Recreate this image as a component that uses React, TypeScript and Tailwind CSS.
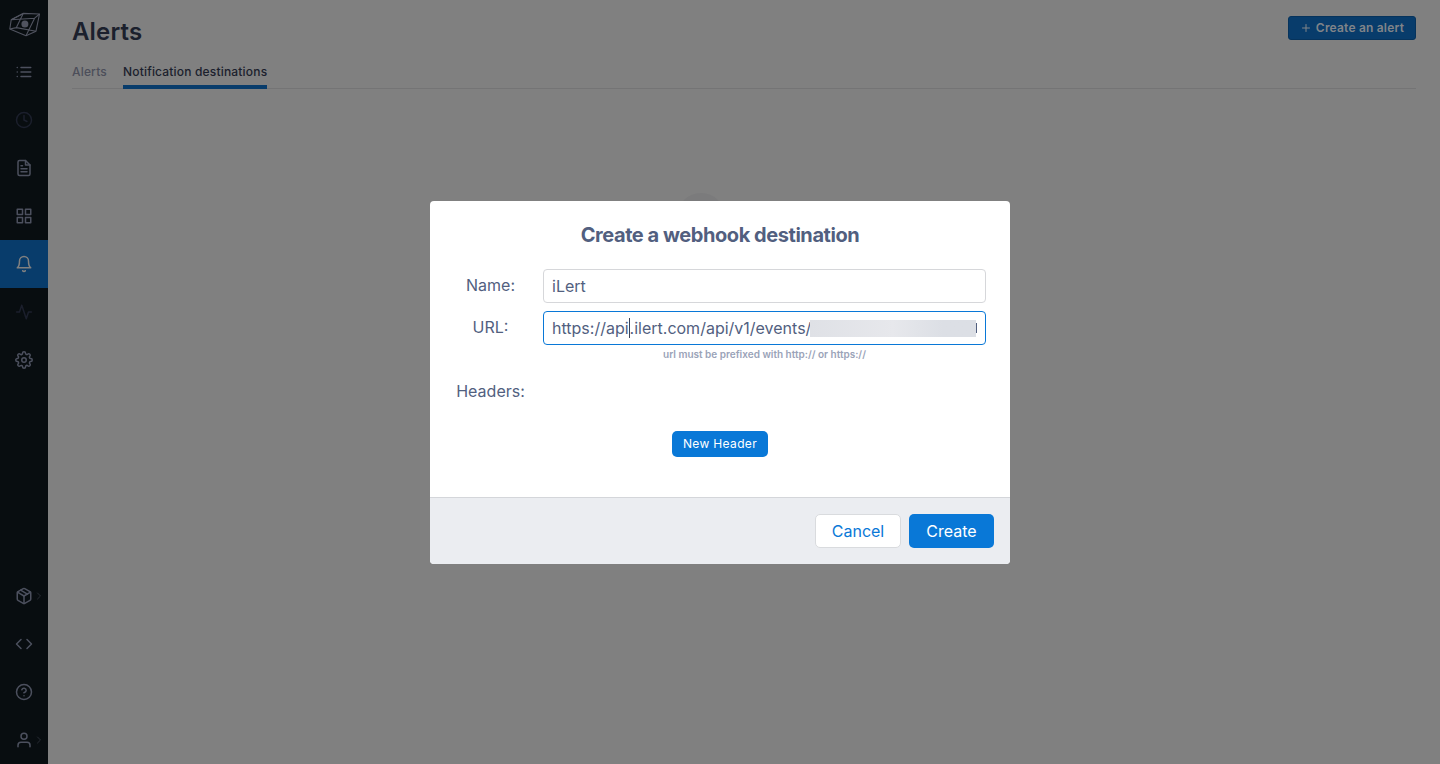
import {
  FiActivity,
  FiBell,
  FiChevronRight,
  FiClock,
  FiCode,
  FiFileText,
  FiGrid,
  FiHelpCircle,
  FiList,
  FiPackage,
  FiPlus,
  FiSettings,
  FiUser,
} from "react-icons/fi";
import type { IconType } from "react-icons";

type Item = { icon: IconType; label: string; state?: "active" | "dim"; more?: boolean };

const topItems: Item[] = [
  { icon: FiList, label: "Logs" },
  { icon: FiClock, label: "Timeline", state: "dim" },
  { icon: FiFileText, label: "Reports" },
  { icon: FiGrid, label: "Boards" },
  { icon: FiBell, label: "Alerts", state: "active" },
  { icon: FiActivity, label: "Activity", state: "dim" },
  { icon: FiSettings, label: "Settings" },
];

const bottomItems: Item[] = [
  { icon: FiPackage, label: "Packages", more: true },
  { icon: FiCode, label: "API" },
  { icon: FiHelpCircle, label: "Help" },
  { icon: FiUser, label: "Account", more: true },
];

function Logo() {
  return (
    <svg width="32" height="26" viewBox="0 0 32 26" fill="none" stroke="#50535f" strokeWidth="1.1" strokeLinejoin="round">
      <path d="M15.2 2.4 31.5 3 28 20.2 18 24.8 1.8 18 3.2 8.8Z" />
      <path d="M3.2 8.8 26.6 7.2 31.5 3M26.6 7.2 18 24.8M15.2 2.4 8.4 16.6M1.8 18 8.4 16.6 28 20.2M3.2 8.8 15.2 2.4" />
      <circle cx="16.9" cy="13" r="3.5" fill="#50535f" stroke="none" />
    </svg>
  );
}

function NavItem({ icon: Icon, label, state, more }: Item) {
  const tone =
    state === "active" ? "bg-[#083c6b] text-[#808080]" : state === "dim" ? "text-[#1b1f2c]" : "text-[#4c505e]";
  return (
    <a aria-label={label} className={`relative flex h-12 w-12 items-center justify-center ${tone}`}>
      <Icon size={18} strokeWidth={2} />
      {more && <FiChevronRight size={12} strokeWidth={1.8} className="absolute top-[18px] left-[33px] text-[#2b2f38]" />}
    </a>
  );
}

export default function App() {
  return (
    <div className="relative flex h-[764px] w-full overflow-hidden bg-[#808080] font-['Inter',sans-serif]">
      <nav className="flex w-12 shrink-0 flex-col bg-[#080d10]">
        <div className="flex h-12 items-center justify-center">
          <Logo />
        </div>
        {topItems.map((item) => (
          <NavItem key={item.label} {...item} />
        ))}
        <div className="flex-1" />
        {bottomItems.map((item) => (
          <NavItem key={item.label} {...item} />
        ))}
      </nav>

      <main className="flex flex-1 flex-col px-6">
        <header className="flex h-16 items-start justify-between pt-4">
          <h1 className="text-2xl leading-[31px] font-semibold tracking-[0.15px] text-[#1b202d]">Alerts</h1>
          <button className="flex h-6 w-32 items-center justify-center gap-1 rounded-[3px] border border-[#06335c] bg-[#083c6b] text-xs font-semibold tracking-[0.2px] whitespace-nowrap text-[#808489]">
            <FiPlus size={12} strokeWidth={2} />
            Create an alert
          </button>
        </header>
        <div className="flex h-[25px] gap-4 border-b border-[#747475] text-xs leading-4 font-medium tracking-[0.18px]">
          <a className="w-[35px] text-[#4c4e5a]">Alerts</a>
          <a className="h-[25px] w-[144px] border-b-4 border-[#083c6b] whitespace-nowrap text-[#1b202d]">Notification destinations</a>
        </div>
        <div className="flex justify-center pt-[104px] pr-[87px]">
          <div className="h-12 w-12 rounded-full bg-[#7b7b7c]" />
        </div>
      </main>

      <div className="absolute inset-0 flex items-center justify-center">
        <section className="mt-[1px] flex h-[363px] w-[580px] flex-col overflow-hidden rounded bg-white text-base text-[#525f7f]">
          <div className="flex h-[296px] flex-col px-6">
            <h2 className="pt-5 text-center text-xl leading-7 font-bold tracking-[-0.44px]">Create a webhook destination</h2>
            <div className="mt-5 flex h-[34px]">
              <label className="w-[73px] text-center leading-8">Name:</label>
              <div className="ml-4 flex w-[443px] items-center rounded border border-[#d6d7da] px-2">iLert</div>
            </div>
            <div className="mt-2 flex h-[34px]">
              <label className="w-[73px] text-center leading-8">URL:</label>
              <div className="relative ml-4 flex w-[443px] items-center overflow-hidden rounded border border-[#0978d7] px-2 whitespace-nowrap">
                <span>https://api</span>
                <span className="h-5 w-px bg-[#3b4358]" />
                <span>.ilert.com/api/v1/events/</span>
                <span className="absolute top-2 left-[266px] h-[17px] w-[166px] bg-linear-to-r from-[#dfe1e6] from-0% via-[#e7e8ec] via-50% to-[#dcdfe5] to-80%" />
                <span className="absolute top-[11px] left-[432px] h-[10px] w-px bg-[#525f7f]" />
              </div>
            </div>
            <p className="ml-[89px] w-[443px] pt-[2px] text-center text-[10px] leading-[14px] font-semibold text-[#9aa3b8]">
              url must be prefixed with http:// or https://
            </p>
            <div className="mt-[14px] w-[73px] text-center leading-8">Headers:</div>
            <button className="mt-6 flex h-[26px] w-24 items-center justify-center self-center rounded-[5px] bg-[#0978d7] text-xs tracking-[0.35px] text-white">
              New Header
            </button>
          </div>
          <footer className="flex h-[67px] justify-end gap-2 border-t border-[#d4d6da] bg-[#ebedf1] px-4 pt-4">
            <button className="h-[34px] w-[86px] rounded-[5px] border border-[#d9dbde] bg-white text-[#0978d7]">Cancel</button>
            <button className="h-[34px] w-[85px] rounded-[5px] bg-[#0978d7] text-white">Create</button>
          </footer>
        </section>
      </div>
    </div>
  );
}
